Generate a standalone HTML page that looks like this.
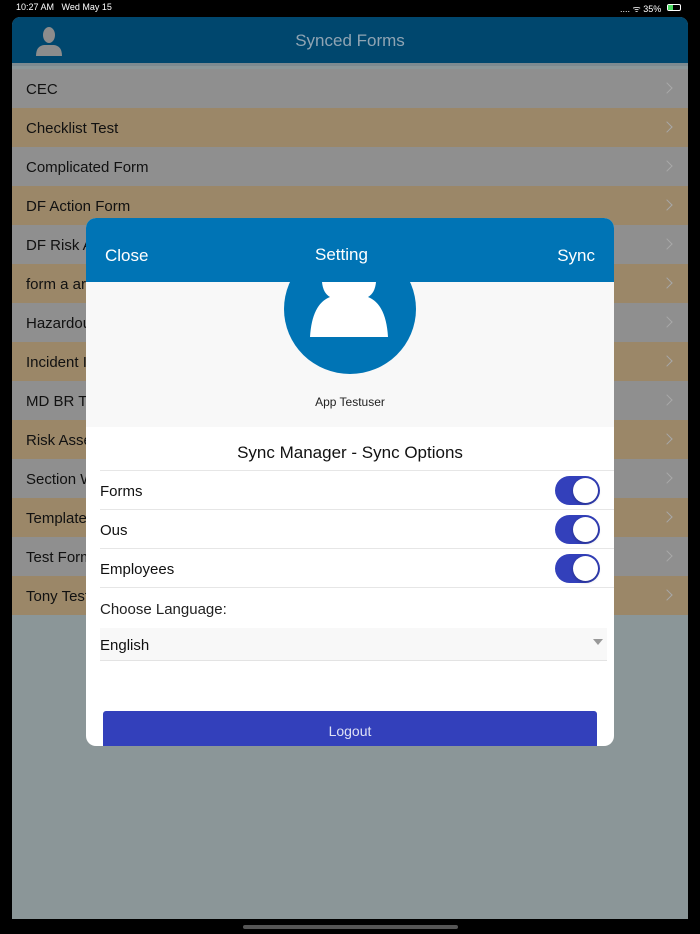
<!DOCTYPE html>
<html><head><style>
*{margin:0;padding:0;box-sizing:border-box}
body{width:700px;height:934px;background:#000;position:relative;overflow:hidden;font-family:"Liberation Sans",sans-serif}
.abs{position:absolute}
.sb{top:2px;font-size:9px;color:#fff}
.app{left:12px;top:17px;width:676px;height:902px;background:#8b9698;border-radius:8px 8px 0 0;overflow:hidden}
.hdr{left:0;top:0;width:676px;height:49px;background:#00476e;color:#8fa4b3;font-size:17px;text-align:center;line-height:48px;border-bottom:3px solid #7d8a90}
.row{left:0;width:676px;height:39px;font-size:15px;line-height:41px;padding-left:14px;color:#111}
.row:after{content:"";position:absolute;right:17px;top:15px;width:7px;height:7px;border-right:1.5px solid #a8a8a8;border-top:1.5px solid #a8a8a8;transform:rotate(45deg)}
.g{background:#8f8f8f}.t{background:#9b8768}
.modal{left:86px;top:218px;width:528px;height:528px;background:#fff;border-radius:10px;overflow:hidden}
.mh{left:0;top:0;width:528px;height:64px;background:#0074b5;color:#fff;font-size:17px}
.tr{left:14px;width:514px;height:39px;border-bottom:1px solid #e6e6e6;font-size:15px;line-height:41px;color:#111}
.tg{position:absolute;right:14px;top:5px;width:45px;height:29px;border-radius:15px;background:#3340bb}
.tg:after{content:"";position:absolute;right:2px;top:2px;width:25px;height:25px;border-radius:50%;background:#fff;box-shadow:0 1px 3px rgba(0,0,0,.3)}
</style></head><body>
<div class="abs sb" style="left:16px">10:27 AM&nbsp;&nbsp; Wed May 15</div>
<div class="abs sb" style="left:620px">.... ᯤ 35%</div>
<div class="abs" style="left:667px;top:4px;width:14px;height:7px;border:1px solid #fff;border-radius:2px"><div style="width:5px;height:5px;background:#4cd964"></div></div>
<div class="abs app">
 <div class="abs hdr">Synced Forms
  <svg class="abs" style="left:22px;top:9px" width="30" height="30" viewBox="0 0 30 30"><ellipse cx="15" cy="9" rx="6" ry="8" fill="#8c8c8c"/><path d="M2 30 Q2 20 10 19 L20 19 Q28 20 28 30Z" fill="#8c8c8c"/></svg>
 </div>
 <div class="abs row g" style="top:52px">CEC</div>
 <div class="abs row t" style="top:91px">Checklist Test</div>
 <div class="abs row g" style="top:130px">Complicated Form</div>
 <div class="abs row t" style="top:169px">DF Action Form</div>
 <div class="abs row g" style="top:208px">DF Risk A</div>
 <div class="abs row t" style="top:247px">form a ar</div>
 <div class="abs row g" style="top:286px">Hazardou</div>
 <div class="abs row t" style="top:325px">Incident I</div>
 <div class="abs row g" style="top:364px">MD BR T</div>
 <div class="abs row t" style="top:403px">Risk Asse</div>
 <div class="abs row g" style="top:442px">Section W</div>
 <div class="abs row t" style="top:481px">Template</div>
 <div class="abs row g" style="top:520px">Test Form</div>
 <div class="abs row t" style="top:559px">Tony Test</div>
</div>
<div class="abs" style="left:243px;top:925px;width:215px;height:4px;border-radius:2px;background:#555"></div>
<div class="abs modal">
 <div class="abs" style="left:0;top:64px;width:528px;height:145px;background:#f8f8f8"></div>
 <div class="abs" style="left:198px;top:26px;width:132px;height:130px;border-radius:50%;background:#0074b5"></div>
 <svg class="abs" style="left:224px;top:64px" width="80" height="56" viewBox="0 0 80 56"><path d="M12 0 Q13 11 20 15 Q2 22 0 55 L78 55 Q76 22 58 15 Q65 11 66 0Z" fill="#fff"/></svg>
 <div class="abs mh"><span class="abs" style="left:19px;top:28px">Close</span><span class="abs" style="left:229px;top:27px">Setting</span><span class="abs" style="right:19px;top:28px">Sync</span></div>
 <div class="abs" style="left:0;top:177px;width:528px;text-align:center;font-size:12px;color:#222">App Testuser</div>
 <div class="abs" style="left:0;top:225px;width:528px;text-align:center;font-size:17px;color:#111">Sync Manager - Sync Options</div>
 <div class="abs" style="left:14px;top:252px;width:514px;border-top:1px solid #e6e6e6"></div>
 <div class="abs tr" style="top:253px">Forms<div class="tg"></div></div>
 <div class="abs tr" style="top:292px">Ous<div class="tg"></div></div>
 <div class="abs tr" style="top:331px">Employees<div class="tg"></div></div>
 <div class="abs" style="left:14px;top:383px;font-size:15px;color:#222">Choose Language:</div>
 <div class="abs" style="left:14px;top:410px;width:507px;height:33px;background:#f8f8f8;border-bottom:1px solid #e3e3e3;font-size:15px;line-height:35px;color:#111">English<span class="abs" style="right:4px;top:11px;border:5px solid transparent;border-top:6px solid #999"></span></div>
 <div class="abs" style="left:17px;top:493px;width:494px;height:40px;background:#3340bb;border-radius:3px;color:#dfe2f5;font-size:14px;text-align:center;line-height:40px">Logout</div>
</div>
</body></html>
